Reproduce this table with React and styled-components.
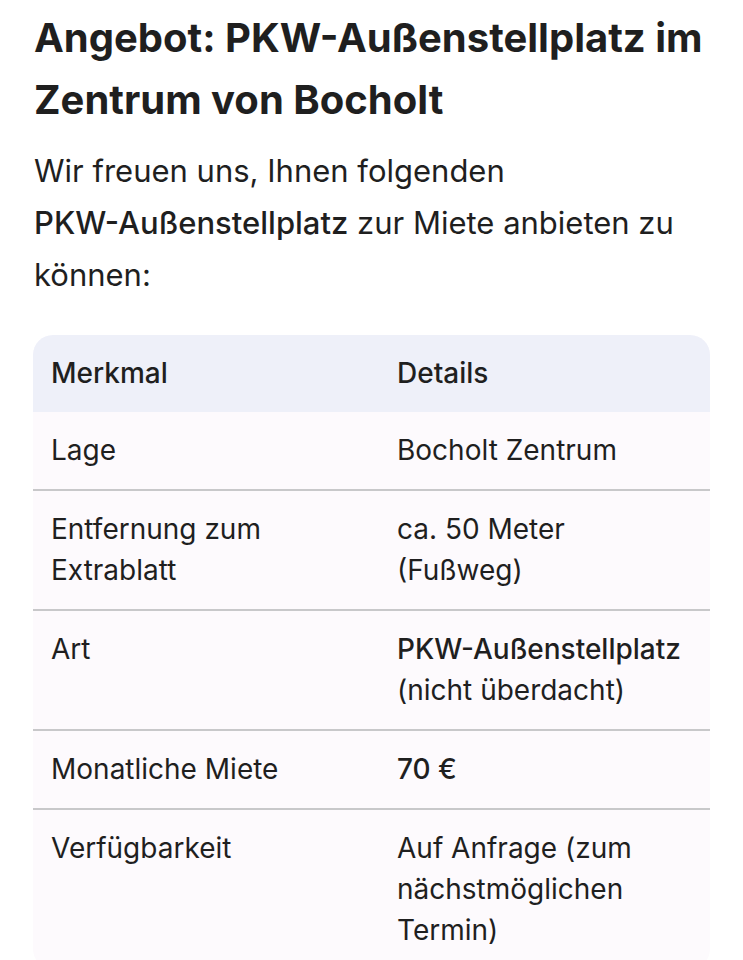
import React from "react";
import styled, { createGlobalStyle } from "styled-components";

const GlobalStyle = createGlobalStyle`
  html, body {
    margin: 0;
    padding: 0;
    background: #ffffff;
  }
  body {
    font-family: Inter, "Noto Sans", sans-serif;
    color: #1f1f1f;
  }
`;

const Strong = styled.b`
  font-weight: 500;
  white-space: nowrap;
`;

const rows = [
  { label: "Lage", value: "Bocholt Zentrum" },
  { label: "Entfernung zum Extrablatt", value: "ca. 50 Meter (Fußweg)" },
  {
    label: "Art",
    value: (
      <>
        <Strong>PKW-Außenstellplatz</Strong> (nicht überdacht)
      </>
    ),
  },
  { label: "Monatliche Miete", value: <Strong>70 €</Strong> },
  {
    label: "Verfügbarkeit",
    value: "Auf Anfrage (zum nächstmöglichen Termin)",
  },
];

export default function App() {
  return (
    <>
      <GlobalStyle />
      <Page>
        <Title>Angebot: PKW-Außenstellplatz im Zentrum von Bocholt</Title>
        <Intro>
          Wir freuen uns, Ihnen folgenden <Strong>PKW-Außenstellplatz</Strong>{" "}
          zur Miete anbieten zu können:
        </Intro>
        <Table>
          <thead>
            <tr>
              <HeadCell>Merkmal</HeadCell>
              <HeadCell>Details</HeadCell>
            </tr>
          </thead>
          <tbody>
            {rows.map((row) => (
              <Row key={row.label}>
                <Cell>{row.label}</Cell>
                <Cell>{row.value}</Cell>
              </Row>
            ))}
          </tbody>
        </Table>
      </Page>
    </>
  );
}

const Page = styled.main`
  padding: 7px 30px 0 34px;
  width: 743px;
  box-sizing: border-box;
`;

const Title = styled.h1`
  margin: 0;
  font-size: 40px;
  line-height: 62px;
  font-weight: 700;
`;

const Intro = styled.p`
  margin: 14px 0 0;
  font-size: 31px;
  line-height: 52px;
  font-weight: 400;
`;

const Table = styled.table`
  margin: 34px 0 0 -1px;
  width: 677px;
  table-layout: fixed;
  border-collapse: separate;
  border-spacing: 0;
  border-radius: 20px;
  overflow: hidden;
  background: #fdfafd;
  font-size: 28px;
  line-height: 41px;
`;

const HeadCell = styled.th`
  box-sizing: border-box;
  text-align: left;
  font-weight: 500;
  background: #eef0f9;
  padding: 18px;
  &:first-child {
    width: 346px;
  }
`;

const Row = styled.tr`
  & + & > td {
    border-top: 2px solid #c8c8ca;
  }
`;

const Cell = styled.td`
  box-sizing: border-box;
  vertical-align: top;
  padding: 18px;
  font-weight: 400;
`;
